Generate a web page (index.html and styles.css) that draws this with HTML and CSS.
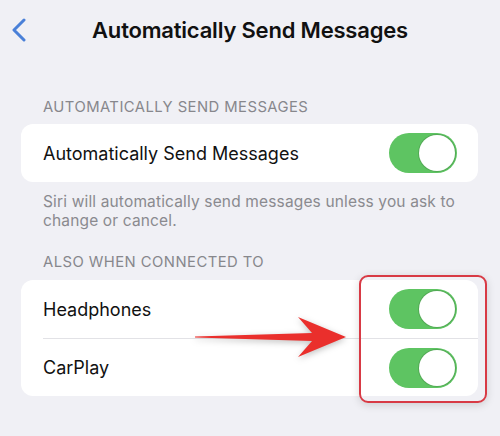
FILE: index.html
```html
<!DOCTYPE html>
<html lang="en">
<head>
  <meta charset="UTF-8" />
  <meta name="viewport" content="width=device-width, initial-scale=1.0"/>
  <title>Automatically Send Messages</title>
  <link rel="stylesheet" href="styles.css">
</head>
<body>

  <div class="screen">
    <nav class="nav">
      <div class="nav-left">
        <svg class="back" width="16" height="24" viewBox="0 0 16 24">
          <path d="M13 2 L3 12 L13 22" fill="none" stroke="#4a80d8" stroke-width="3" stroke-linecap="round" stroke-linejoin="round"/>
        </svg>
      </div>
      <h1 class="nav-title">Automatically Send Messages</h1>
      <div></div>
    </nav>

    <p class="group-header">AUTOMATICALLY SEND MESSAGES</p>
    <div class="group">
      <div class="row">
        <span>Automatically Send Messages</span>
        <span class="toggle on"></span>
      </div>
    </div>
    <p class="group-footer">Siri will automatically send messages unless you ask to change or cancel.</p>

    <p class="group-header second">ALSO WHEN CONNECTED TO</p>
    <div class="group">
      <div class="row">
        <span>Headphones</span>
        <span class="toggle on"></span>
      </div>
      <div class="row">
        <span>CarPlay</span>
        <span class="toggle on"></span>
      </div>
    </div>

    <!-- callout drawn on top of the list -->
    <div class="highlight"></div>
    <svg class="arrow" width="170" height="60" viewBox="0 0 170 60">
      <polygon points="5,26.5 122,23 108,7 156,27 108,47 122,31 5,27.5" fill="#ea2f2c"/>
    </svg>
  </div>

</body>
</html>
```

FILE: styles.css
```css
* {
  margin: 0;
  padding: 0;
  box-sizing: border-box;
}

body, html {
  height: 100%;
  background: #f0f0f5;
  font-family: Inter, "Noto Sans", sans-serif;
  color: #111;
}

.screen {
  position: relative;
  width: 500px;
  height: 436px;
  overflow: hidden;
}

.nav {
  height: 60px;
  display: grid;
  grid-template-columns: 1fr auto 1fr;
  align-items: center;
}

.nav-left {
  padding-left: 11px;
  display: flex;
  align-items: center;
}

.nav-title {
  font-size: 22px;
  font-weight: 600;
  letter-spacing: -0.2px;
}

.group-header {
  margin: 38px 0 8px 43px;
  font-size: 14.8px;
  line-height: 18px;
  color: #87878c;
  letter-spacing: 0.45px;
}

.group-header.second {
  margin-top: 23px;
  margin-bottom: 9px;
}

.group {
  margin: 0 22px 0 21px;
  background: #fff;
  border-radius: 12px;
  padding-left: 22px;
}

.row {
  height: 58px;
  display: flex;
  align-items: center;
  justify-content: space-between;
  padding-right: 21px;
  font-size: 18px;
}

.row + .row {
  border-top: 1px solid #e2e2e6;
}

.group-footer {
  margin: 10px 30px 0 43px;
  font-size: 15.5px;
  line-height: 19px;
  color: #8a8a8f;
  letter-spacing: 0.15px;
}

.toggle {
  width: 68px;
  height: 40px;
  border-radius: 20px;
  background: #e5e5ea;
  position: relative;
}

.toggle.on {
  background: #5ec462;
}

.toggle::after {
  content: "";
  position: absolute;
  top: 2px;
  left: 2px;
  width: 36px;
  height: 36px;
  border-radius: 50%;
  background: #fff;
  box-shadow: 0 0 0 1px rgba(60, 120, 60, 0.35);
}

.toggle.on::after {
  left: 30px;
}

.highlight {
  position: absolute;
  left: 359px;
  top: 275px;
  width: 128px;
  height: 128px;
  border: 2px solid #d83a45;
  border-radius: 9px;
  box-shadow: 0 2px 8px rgba(0, 0, 0, 0.15);
}

.arrow {
  position: absolute;
  left: 190px;
  top: 310px;
  filter: drop-shadow(0 2px 3px rgba(0, 0, 0, 0.25));
}
```
